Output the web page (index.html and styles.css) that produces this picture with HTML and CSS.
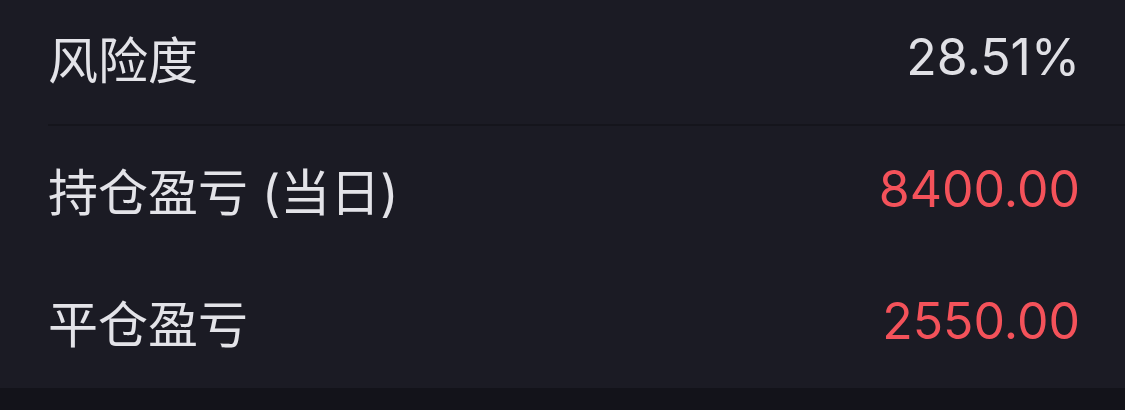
FILE: index.html
```html
<!DOCTYPE html>
<html lang="zh-CN">
<head>
<meta charset="utf-8">
<link rel="stylesheet" href="styles.css">
</head>
<body>
<div class="panel">
  <div class="row row-first">
    <span class="label">风险度</span>
    <span class="value">28.51%</span>
  </div>
  <div class="row row-second">
    <span class="label">持仓盈亏 (当日)</span>
    <span class="value red">8400.00</span>
  </div>
  <div class="row row-third">
    <span class="label">平仓盈亏</span>
    <span class="value red">2550.00</span>
  </div>
</div>
<div class="footer"></div>
</body>
</html>
```
FILE: styles.css
```css
html, body {
  margin: 0;
  padding: 0;
  background: #13131a;
}
body {
  width: 1125px;
  height: 410px;
  overflow: hidden;
  font-family: "Inter", "Noto Sans CJK SC", sans-serif;
}
.panel {
  background: #1b1b24;
  padding-left: 48px;
}
.row {
  box-sizing: border-box;
  display: flex;
  align-items: center;
  justify-content: space-between;
  padding-right: 45px;
}
.row-first {
  height: 126px;
  padding-bottom: 10px;
  border-bottom: 2px solid #15151c;
}
.row-second {
  height: 134px;
  padding-bottom: 8px;
}
.row-third {
  height: 128px;
  padding-bottom: 6px;
}
.label {
  font-size: 50px;
  color: #e3e3e8;
}
.value {
  font-size: 50px;
  color: #e0e0e5;
}
.red {
  color: #f4525a;
}
.footer {
  height: 22px;
  background: #13131a;
}
```
